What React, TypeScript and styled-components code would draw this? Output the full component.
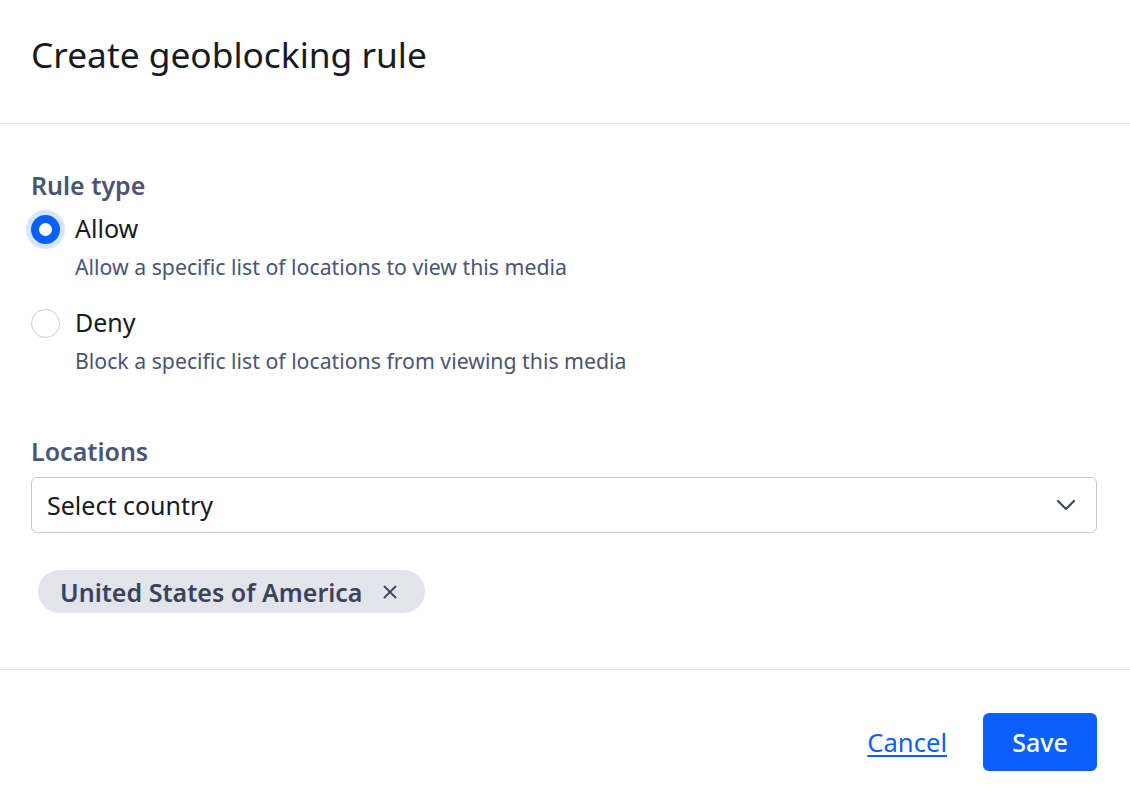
import React, { useState } from "react";
import styled, { createGlobalStyle } from "styled-components";

const GlobalStyle = createGlobalStyle`
  html, body { margin: 0; padding: 0; background: #ffffff; }
  body { font-family: "Noto Sans", "Open Sans", sans-serif; color: #161a23; }
  * { box-sizing: border-box; }
`;

const Dialog = styled.div`
  width: 1130px;
  height: 792px;
  display: flex;
  flex-direction: column;
  background: #fff;
`;

const Header = styled.header`
  height: 124px;
  padding: 32px 31px 0;
  border-bottom: 1px solid #e2e5ea;
`;

const Title = styled.h1`
  margin: 0;
  font-size: 35.3px;
  line-height: 44px;
  font-weight: 400;
  color: #161a23;
`;

const Body = styled.section`
  height: 546px;
  padding: 45px 33px 0 31px;
  border-bottom: 1px solid #e2e5ea;
  display: flex;
  flex-direction: column;
`;

const FieldLabel = styled.div<{ $top?: number }>`
  margin-top: ${(p) => p.$top ?? 0}px;
  font-size: 25px;
  line-height: 32px;
  font-weight: 600;
  color: #4a5572;
`;

const RadioGroup = styled.div`
  display: flex;
  flex-direction: column;
  margin-top: 11px;
  gap: 25px;
`;

const Option = styled.label`
  display: flex;
  flex-direction: column;
  cursor: pointer;
`;

const OptionRow = styled.div`
  display: flex;
  align-items: center;
  gap: 15px;
  height: 32px;
`;

const RadioCircle = styled.span<{ $checked: boolean }>`
  width: 29px;
  height: 29px;
  border-radius: 50%;
  flex: none;
  margin-top: 2px;
  background: #fff;
  border: ${(p) => (p.$checked ? "8.5px solid #0a5ffd" : "1px solid #c5ccda")};
  box-shadow: ${(p) => (p.$checked ? "0 0 0 5px #d8e5ff" : "none")};
`;

const OptionText = styled.span`
  font-size: 25px;
  line-height: 32px;
  color: #161a23;
`;

const OptionDesc = styled.div`
  margin-top: 9px;
  padding-left: 44px;
  font-size: 21.25px;
  line-height: 28px;
  color: #4a5572;
`;

const Select = styled.div`
  margin-top: 10px;
  height: 56px;
  border: 1px solid #c4cad7;
  border-radius: 6px;
  display: flex;
  align-items: center;
  justify-content: space-between;
  padding: 0 20px 0 15px;
  cursor: pointer;
`;

const SelectText = styled.span`
  font-size: 25px;
  line-height: 32px;
  color: #161a23;
`;

const Chips = styled.div`
  display: flex;
  flex-wrap: wrap;
  gap: 8px;
  margin-top: 37px;
  padding-left: 7px;
`;

const Chip = styled.div`
  display: inline-flex;
  align-items: center;
  height: 43px;
  padding: 0 28px 0 22px;
  border-radius: 22px;
  background: #e1e4eb;
  gap: 21px;
`;

const ChipText = styled.span`
  font-size: 25px;
  line-height: 32px;
  font-weight: 600;
  color: #3a4359;
`;

const ChipRemove = styled.button`
  border: 0;
  background: none;
  padding: 0;
  display: flex;
  align-items: center;
  cursor: pointer;
`;

const Footer = styled.footer`
  flex: 1;
  display: flex;
  justify-content: flex-end;
  align-items: flex-start;
  padding: 43px 33px 0 31px;
  gap: 36px;
`;

const LinkButton = styled.button`
  border: 0;
  background: none;
  padding: 0;
  height: 58px;
  font-family: inherit;
  font-size: 25.6px;
  font-weight: 400;
  color: #0a5ffd;
  text-decoration: underline;
  text-decoration-thickness: 2px;
  text-underline-offset: 3px;
  cursor: pointer;
`;

const PrimaryButton = styled.button`
  height: 58px;
  width: 114px;
  border: 0;
  border-radius: 6px;
  background: #0a5ffd;
  color: #fff;
  font-family: inherit;
  font-size: 25px;
  font-weight: 500;
  cursor: pointer;
`;

const Chevron = () => (
  <svg width="20" height="12" viewBox="0 0 20 12" fill="none">
    <path d="M2 2l8 8 8-8" stroke="#3e4761" strokeWidth="2.2" strokeLinecap="round" strokeLinejoin="round" />
  </svg>
);

const CloseIcon = () => (
  <svg width="14" height="14" viewBox="0 0 14 14" fill="none">
    <path d="M1.5 1.5l11 11M12.5 1.5l-11 11" stroke="#3e4761" strokeWidth="1.8" strokeLinecap="round" />
  </svg>
);

export default function App() {
  const [rule, setRule] = useState<"allow" | "deny">("allow");
  const options = [
    { id: "allow" as const, label: "Allow", desc: "Allow a specific list of locations to view this media" },
    { id: "deny" as const, label: "Deny", desc: "Block a specific list of locations from viewing this media" },
  ];
  return (
    <>
      <GlobalStyle />
      <Dialog>
        <Header>
          <Title>Create geoblocking rule</Title>
        </Header>
        <Body>
          <FieldLabel>Rule type</FieldLabel>
          <RadioGroup>
            {options.map((o) => (
              <Option key={o.id} onClick={() => setRule(o.id)}>
                <OptionRow>
                  <RadioCircle $checked={rule === o.id} />
                  <OptionText>{o.label}</OptionText>
                </OptionRow>
                <OptionDesc>{o.desc}</OptionDesc>
              </Option>
            ))}
          </RadioGroup>
          <FieldLabel $top={60}>Locations</FieldLabel>
          <Select>
            <SelectText>Select country</SelectText>
            <Chevron />
          </Select>
          <Chips>
            <Chip>
              <ChipText>United States of America</ChipText>
              <ChipRemove aria-label="Remove">
                <CloseIcon />
              </ChipRemove>
            </Chip>
          </Chips>
        </Body>
        <Footer>
          <LinkButton>Cancel</LinkButton>
          <PrimaryButton>Save</PrimaryButton>
        </Footer>
      </Dialog>
    </>
  );
}
